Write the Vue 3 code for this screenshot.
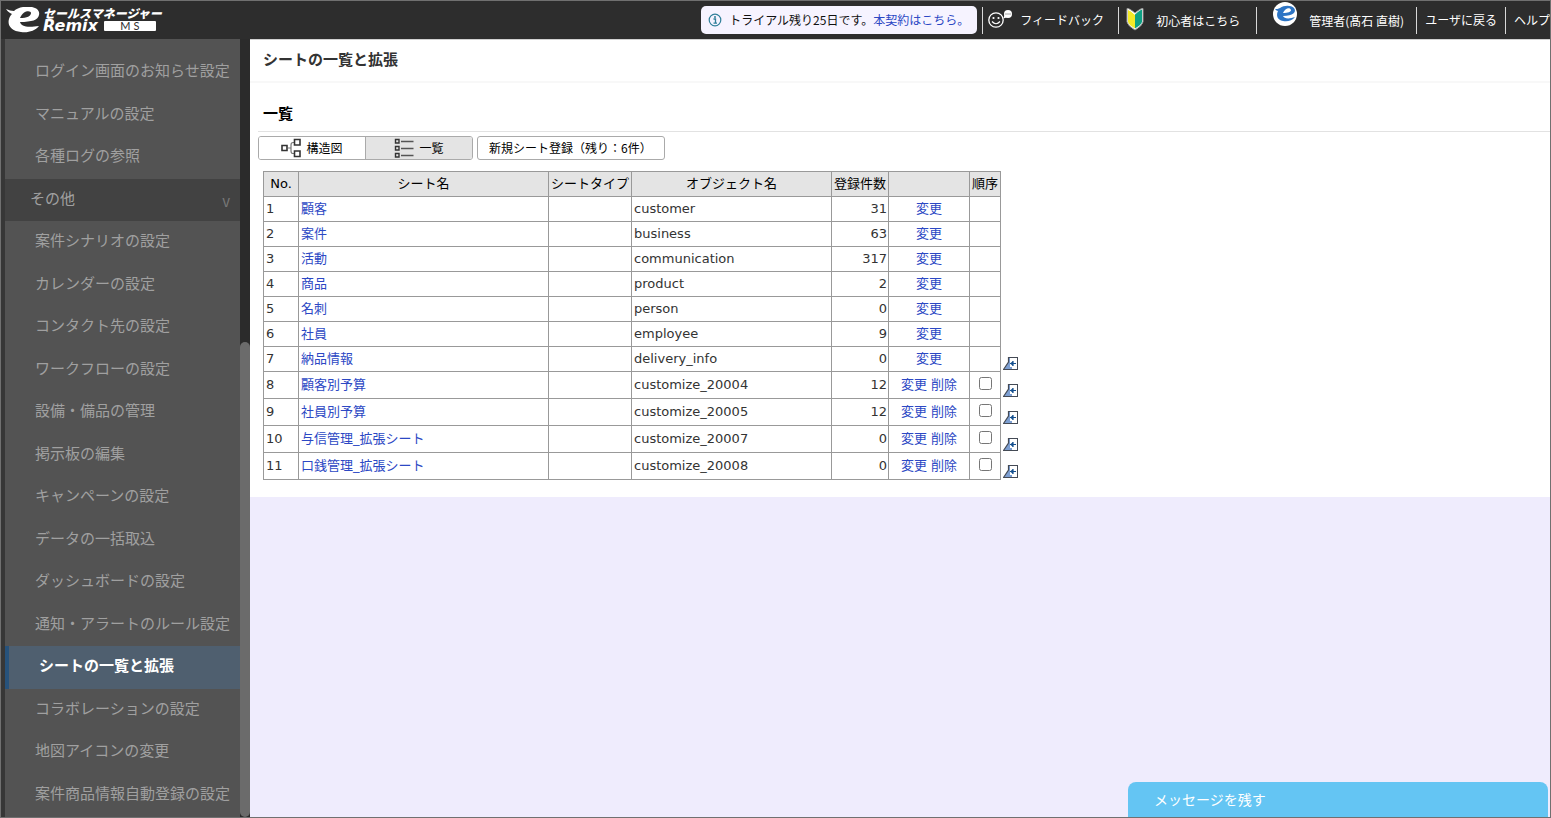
<script setup>
const menuTop = ['ログイン画面のお知らせ設定', 'マニュアルの設定', '各種ログの参照']
const menuOther = [
  '案件シナリオの設定',
  'カレンダーの設定',
  'コンタクト先の設定',
  'ワークフローの設定',
  '設備・備品の管理',
  '掲示板の編集',
  'キャンペーンの設定',
  'データの一括取込',
  'ダッシュボードの設定',
  '通知・アラートのルール設定',
  'シートの一覧と拡張',
  'コラボレーションの設定',
  '地図アイコンの変更',
  '案件商品情報自動登録の設定',
]
const current = 'シートの一覧と拡張'

const sheets = [
  { name: '顧客', object: 'customer', count: 31 },
  { name: '案件', object: 'business', count: 63 },
  { name: '活動', object: 'communication', count: 317 },
  { name: '商品', object: 'product', count: 2 },
  { name: '名刺', object: 'person', count: 0 },
  { name: '社員', object: 'employee', count: 9 },
  { name: '納品情報', object: 'delivery_info', count: 0 },
  { name: '顧客別予算', object: 'customize_20004', count: 12, custom: true },
  { name: '社員別予算', object: 'customize_20005', count: 12, custom: true },
  { name: '与信管理_拡張シート', object: 'customize_20007', count: 0, custom: true },
  { name: '口銭管理_拡張シート', object: 'customize_20008', count: 0, custom: true },
]
</script>

<template>
  <div class="app">
    <header class="topbar">
      <a class="brand" href="#">
        <svg class="brand-mark" viewBox="0 0 34 26" aria-hidden="true">
          <path d="M0 2 C3 3 5 4 8 4 C12 0 20 -1 26 0 C31 1 34 4 33 8 C32 13 26 15 14 15 C15 19 20 21 33 19 C29 24 22 26 15 25 C6 24 1 19 3 12 C4 9 5 8 6 7 C4 6 2 5 0 2Z M14 11 C21 11 25 9 25 6 C25 3 17 3 14 11Z" fill="#fff" fill-rule="evenodd" />
        </svg>
        <span class="brand-text">
          <span class="brand-jp">セールスマネージャー</span>
          <span class="brand-en"><b>Remix</b><i>M S</i></span>
        </span>
      </a>

      <div class="trial">
        <svg class="info" viewBox="0 0 14 14" aria-hidden="true">
          <circle cx="7" cy="7" r="5.8" fill="none" stroke="#2f7f99" stroke-width="1.2" />
          <circle cx="7" cy="4" r="1" fill="#2f7f99" />
          <path d="M5.5 6H7.5V10M5.5 10.2H9" fill="none" stroke="#2f7f99" stroke-width="1.3" />
        </svg>
        <span>トライアル残り25日です。<a href="#">本契約はこちら。</a></span>
      </div>

      <nav class="topnav">
        <a class="nav-feedback" href="#">
          <svg class="smile" viewBox="0 0 26 22" aria-hidden="true">
            <circle cx="8" cy="12" r="7.2" fill="none" stroke="#fff" stroke-width="1.3" />
            <circle cx="5.5" cy="10" r="1.1" fill="#fff" />
            <circle cx="10.5" cy="10" r="1.1" fill="#fff" />
            <path d="M4 13.5Q8 18 12 13.5" fill="none" stroke="#fff" stroke-width="1.2" />
            <circle cx="20" cy="6" r="4" fill="#fff" />
            <path d="M16.5 7L15.5 10.5L19.5 9Z" fill="#fff" />
            <path d="M17.5 6H18.5M19.5 6H20.5M21.5 6H22.5" stroke="#444" stroke-width="1" />
          </svg>
          フィードバック
        </a>
        <a class="nav-beginner" href="#">
          <svg class="leaf" viewBox="0 0 18 24" aria-hidden="true">
            <path d="M1 1.5Q3 1 9 6Q15 1 17 1.5V15Q16 19 9 23Q2 19 1 15Z" fill="#fff" stroke="#999" stroke-width="1" />
            <path d="M2 2.5Q4 3 9 7.5V21.5Q3 18 2 15Z" fill="#f3e928" />
            <path d="M16 2.5Q14 3 9 7.5V21.5Q15 18 16 15Z" fill="#0ea084" />
            <path d="M2 2.5Q4 3 9 7.5" fill="none" stroke="#fff" stroke-width="1" />
          </svg>
          初心者はこちら
        </a>
        <a class="nav-user" href="#">
          <svg class="avatar" viewBox="0 0 24 24" aria-hidden="true">
            <circle cx="12" cy="12" r="12" fill="#fff" />
            <path d="M2 7C4 7 5 7 7 6C11 3 18 3 21 6C24 10 20 14 10 14C11 17 17 17 22 15C19 19 14 20 10 19C4 18 3 13 5 9C4 9 3 8 2 7Z M10 11C15 11 18 10 18 8C17 5 12 6 10 11Z" fill="#2d75c5" fill-rule="evenodd" />
          </svg>
          管理者(髙石 直樹)
        </a>
        <a class="nav-plain" href="#">ユーザに戻る</a>
        <a class="nav-plain" href="#">ヘルプ</a>
      </nav>
    </header>

    <div class="body">
      <nav class="sidebar">
        <a v-for="m in menuTop" :key="m" class="item" href="#">{{ m }}</a>
        <button class="group" type="button"><span>その他</span><span class="caret">v</span></button>
        <a v-for="m in menuOther" :key="m" class="item" :class="{ active: m === current }" href="#">{{ m }}</a>
      </nav>
      <div class="scroll"><div class="thumb"></div></div>

      <main class="main">
        <section class="panel">
          <h1>シートの一覧と拡張</h1>
          <h2>一覧</h2>
          <div class="tools">
            <div class="tabs">
              <button type="button">
                <svg class="tab-icon" viewBox="0 0 20 20" aria-hidden="true">
                  <path d="M7 10H10M15 4.5H12Q10 4.5 10 7V13Q10 15.5 12 15.5H15" fill="none" stroke="#777" stroke-width="1.2" />
                  <path d="M1 7.5H6V12.5H1ZM13.5 1.5H19V7H13.5ZM13.5 13H19V18.5H13.5Z" fill="#fff" stroke="#333" stroke-width="1.6" />
                </svg>
                <span>構造図</span>
              </button>
              <button type="button" class="on">
                <svg class="tab-icon" viewBox="0 0 20 20" aria-hidden="true">
                  <path d="M1.5 1.5H5V5H1.5ZM1.5 8.5H5V12H1.5ZM1.5 15.5H5V19H1.5Z" fill="none" stroke="#333" stroke-width="1.4" />
                  <path d="M7 3.5H19.5M7 10.5H19.5M7 17.5H19.5" stroke="#555" stroke-width="1.3" />
                </svg>
                <span>一覧</span>
              </button>
            </div>
            <button type="button" class="create">新規シート登録（残り：6件）</button>
          </div>

          <div class="sheet-area">
            <table>
              <colgroup>
                <col class="c-no" /><col class="c-name" /><col class="c-type" /><col class="c-object" />
                <col class="c-count" /><col class="c-action" /><col class="c-order" />
              </colgroup>
              <thead>
                <tr>
                  <th>No.</th>
                  <th>シート名</th>
                  <th>シートタイプ</th>
                  <th>オブジェクト名</th>
                  <th>登録件数</th>
                  <th></th>
                  <th>順序</th>
                </tr>
              </thead>
              <tbody>
                <tr v-for="(s, i) in sheets" :key="s.object" :class="{ custom: s.custom }">
                  <td>{{ i + 1 }}</td>
                  <td><a href="#">{{ s.name }}</a></td>
                  <td></td>
                  <td>{{ s.object }}</td>
                  <td class="num">{{ s.count }}</td>
                  <td class="mid"><a href="#">変更</a><template v-if="s.custom">&nbsp;<a href="#">削除</a></template></td>
                  <td class="mid"><input v-if="s.custom" type="checkbox" :aria-label="s.name + 'の順序'" /></td>
                </tr>
              </tbody>
            </table>
            <div class="inserts">
              <button v-for="n in 5" :key="n" type="button" aria-label="ここへ移動">
                <svg viewBox="0 0 15 13" aria-hidden="true">
                  <path d="M0.5 12.5L5.5 5V0.5H14.5V12.5Z" fill="#7d9fd2" stroke="#444a55" stroke-width="1.2" />
                  <path d="M7 1H14V12H9V10H7Z" fill="#fff" />
                  <path d="M7 6.5H13M10 4V9" stroke="#15508f" stroke-width="1.2" fill="none" />
                  <path d="M7 6.5L10 4V9Z" fill="#15508f" />
                </svg>
              </button>
            </div>
          </div>
        </section>
      </main>
    </div>

    <button class="chat" type="button">メッセージを残す</button>
  </div>
</template>

<style>
body {
  margin: 0;
}
</style>

<style scoped>
.app {
  box-sizing: border-box;
  height: 100vh;
  min-width: 1200px;
  display: flex;
  flex-direction: column;
  border: 1px solid #707070;
  overflow: hidden;
  background: #373737;
  font-family: "Noto Sans CJK JP", sans-serif;
  font-size: 12px;
  color: #333;
}
a {
  color: #2c48c4;
  text-decoration: none;
}
button {
  font: inherit;
  cursor: pointer;
}
.topbar {
  flex: none;
  display: flex;
  align-items: center;
  height: 38px;
  background: #2d2d2d;
}
.brand {
  display: flex;
  gap: 3px;
  padding-left: 5px;
  margin-right: auto;
  color: #fff;
}
.brand-mark {
  width: 34px;
  height: 26px;
}
.brand-text {
  display: flex;
  flex-direction: column;
}
.brand-jp {
  font-size: 12px;
  line-height: 12px;
  font-weight: 900;
  font-style: italic;
}
.brand-en {
  display: flex;
  align-items: center;
  gap: 6px;
}
.brand-en b {
  font: italic 700 16px/14px "DejaVu Sans", sans-serif;
}
.brand-en i {
  box-sizing: border-box;
  width: 52px;
  height: 10px;
  border-radius: 1px;
  background: #fff;
  color: #2d2d2d;
  font: normal 11px/10px Lato, sans-serif;
  text-align: center;
}
.trial {
  display: flex;
  align-items: center;
  gap: 7px;
  box-sizing: border-box;
  width: 276px;
  height: 28px;
  padding: 0 0 1px 7px;
  border-radius: 5px;
  background: #f6f3ff;
  color: #111;
  white-space: nowrap;
}
.info {
  flex: none;
  width: 14px;
  height: 14px;
}
.topnav {
  flex: none;
  display: flex;
  margin-left: 5px;
}
.topnav a {
  box-sizing: border-box;
  display: flex;
  align-items: center;
  height: 27px;
  border-left: 1px solid #d8d8d8;
  color: #fff;
  white-space: nowrap;
}
.topnav svg {
  flex: none;
}
.topnav .nav-feedback {
  width: 136px;
  padding: 0 0 2px 5px;
  gap: 6px;
}
.smile {
  width: 26px;
  height: 22px;
}
.nav-beginner {
  width: 138px;
  padding-left: 7px;
  gap: 12px;
}
.leaf {
  width: 18px;
  height: 24px;
  margin-bottom: 2px;
}
.nav-user {
  width: 160px;
  padding-left: 16px;
  gap: 12px;
}
.avatar {
  width: 24px;
  height: 24px;
  margin-bottom: 12px;
}
.topnav .nav-plain {
  padding: 0 8px 2px;
}
.topnav .nav-plain:last-child {
  padding-right: 0;
}
.body {
  flex: 1;
  min-height: 0;
  display: flex;
}
.sidebar {
  flex: none;
  box-sizing: border-box;
  width: 235px;
  margin-left: 4px;
  padding-top: 12px;
  overflow: hidden;
  background: #535353;
  font-size: 15px;
  line-height: 1.5;
}
.item {
  display: block;
  padding: 8px 0 12px 30px;
  color: #a0a0a0;
  white-space: nowrap;
}
.item.active {
  border-left: 4px solid #27527b;
  background: #4f5f6f;
  color: #fff;
  font-weight: bold;
}
.group {
  display: flex;
  justify-content: space-between;
  align-items: flex-end;
  width: 100%;
  padding: 8px 10px 12px 25px;
  border: 0;
  background: #424242;
  color: #a0a0a0;
  line-height: 1.5;
}
.caret {
  padding-bottom: 1px;
  color: #777;
  line-height: 1;
}
.scroll {
  flex: none;
  display: flex;
  flex-direction: column;
  justify-content: flex-end;
  width: 10px;
  background: #2b2b2b;
}
.thumb {
  height: 61%;
  border-radius: 5px;
  background: #6b6b6b;
}
.main {
  flex: 1;
  background: #efecfd;
}
.panel {
  padding-bottom: 17px;
  border-top: 1px solid #d0d0d0;
  background: #fff;
}
h1 {
  margin: 0;
  padding: 0 0 4px 13px;
  border-bottom: 2px solid #f8f8f8;
  font-size: 15px;
  line-height: 37px;
}
h2 {
  margin: 15px 0 0 8px;
  padding: 0 0 4px 5px;
  border-bottom: 1px solid #e2e2e2;
  color: #000;
  font-size: 15px;
  line-height: 29px;
}
.tools {
  display: flex;
  gap: 4px;
  padding: 4px 8px 0;
}
.tabs {
  display: flex;
  width: 215px;
  box-sizing: border-box;
  border: 1px solid #aaa;
  border-radius: 3px;
  overflow: hidden;
}
.tabs button {
  flex: 1;
  display: flex;
  align-items: center;
  justify-content: center;
  gap: 5px;
  height: 22px;
  padding: 0;
  border: 0;
  background: #fff;
  color: #000;
}
.tabs .on {
  border-left: 1px solid #aaa;
  background: #e4e4e4;
}
.tabs span {
  padding-bottom: 2px;
}
.tab-icon {
  width: 20px;
  height: 20px;
}
.create {
  box-sizing: border-box;
  width: 188px;
  height: 24px;
  padding: 0 0 2px 11px;
  border: 1px solid #aaa;
  border-radius: 3px;
  background: #fff;
  color: #000;
  text-align: left;
  white-space: nowrap;
}
.sheet-area {
  display: flex;
  align-items: flex-end;
  gap: 2px;
  padding: 11px 13px 0;
}
table {
  table-layout: fixed;
  width: 738px;
  border-collapse: collapse;
  font-family: "DejaVu Sans", "Noto Sans CJK JP", sans-serif;
  font-size: 13px;
  line-height: 20px;
}
.c-no { width: 35px; }
.c-name { width: 250px; }
.c-type { width: 83px; }
.c-object { width: 200px; }
.c-count { width: 57px; }
.c-action { width: 81px; }
.c-order { width: 31px; }
th,
td {
  box-sizing: border-box;
  height: 25px;
  padding: 0 2px;
  border: 1px solid #999;
  white-space: nowrap;
}
th {
  padding: 0;
  background: #e4e4e4;
  color: #000;
  font-weight: normal;
}
.custom td {
  height: 27px;
}
.num {
  padding-right: 1px;
  text-align: right;
}
.mid {
  text-align: center;
}
td input {
  display: block;
  width: 13px;
  height: 13px;
  margin: 0 auto 4px;
}
.inserts {
  display: flex;
  flex-direction: column;
  gap: 14px;
  padding-bottom: 2px;
}
.inserts button {
  display: block;
  padding: 0;
  border: 0;
  background: none;
}
.inserts svg {
  display: block;
  width: 15px;
  height: 13px;
}
.chat {
  position: fixed;
  right: 3px;
  bottom: 1px;
  width: 420px;
  height: 35px;
  padding: 0 26px 2px;
  border: 0;
  border-radius: 8px 8px 0 0;
  background: #64c5f3;
  color: #fff;
  font-size: 14px;
  text-align: left;
}
</style>
